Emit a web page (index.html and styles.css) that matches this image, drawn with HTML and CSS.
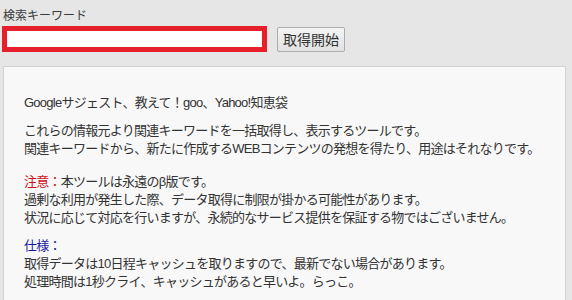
FILE: index.html
```html
<!DOCTYPE html>
<html lang="ja">
<head>
<meta charset="utf-8">
<title>関連キーワード取得ツール</title>
<link rel="stylesheet" href="styles.css">
</head>
<body>
<form class="search">
  <label class="label" for="kw">検索キーワード</label>
  <div class="row">
    <input class="input" id="kw" type="text">
    <button class="btn" type="button">取得開始</button>
  </div>
</form>
<div class="panel">
  <p class="para">Googleサジェスト、教えて！goo、Yahoo!知恵袋</p>
  <p class="para para-wide">これらの情報元より関連キーワードを一括取得し、表示するツールです。<br>関連キーワードから、新たに作成するWEBコンテンツの発想を得たり、用途はそれなりです。</p>
  <p class="para"><span class="warn">注意：</span>本ツールは永遠のβ版です。<br>過剰な利用が発生した際、データ取得に制限が掛かる可能性があります。<br>状況に応じて対応を行いますが、永続的なサービス提供を保証する物ではございません。</p>
  <p class="para"><span class="spec">仕様：</span><br>取得データは10日程キャッシュを取りますので、最新でない場合があります。<br>処理時間は1秒クライ、キャッシュがあると早いよ。らっこ。</p>
</div>
</body>
</html>
```
FILE: styles.css
```css
html, body {
  margin: 0;
  padding: 0;
  background: #e6e6e6;
  font-family: "Noto Sans CJK JP", "Noto Sans", sans-serif;
  color: #333;
  overflow: hidden;
}
.search {
  padding: 7px 0 0 2px;
  margin: 0;
}
.label {
  display: block;
  font-size: 12px;
  line-height: 16px;
  margin: 0 0 3px 1px;
  color: #3a3a3a;
}
.row {
  display: flex;
  align-items: center;
  gap: 10px;
}
.input {
  width: 265px;
  height: 26px;
  box-sizing: border-box;
  border: 5px solid #e5202a;
  background: #fff;
  margin: 0;
  padding: 0 4px;
  outline: none;
}
.btn {
  height: 25px;
  box-sizing: border-box;
  padding: 0 5px;
  font-family: inherit;
  font-size: 14px;
  line-height: 1;
  color: #333;
  border: 1px solid #acacac;
  border-radius: 2px;
  background: linear-gradient(#f4f4f4, #e2e2e2);
}
.panel {
  margin: 14px 6px 0 3px;
  background: #f8f8f8;
  border: 1px solid #d2d2d2;
  border-bottom: 0;
  padding: 27px 20px 0;
  height: 234px;
  box-sizing: border-box;
  white-space: nowrap;
  font-family: "Liberation Sans", "Noto Sans CJK JP", sans-serif;
  letter-spacing: -0.75px;
}
.para {
  margin: 0 0 10px;
  font-size: 13px;
  line-height: 18px;
}
.para-wide {
  margin-bottom: 15px;
}
.warn {
  color: #d0101a;
}
.spec {
  color: #1a1aa0;
}
```
